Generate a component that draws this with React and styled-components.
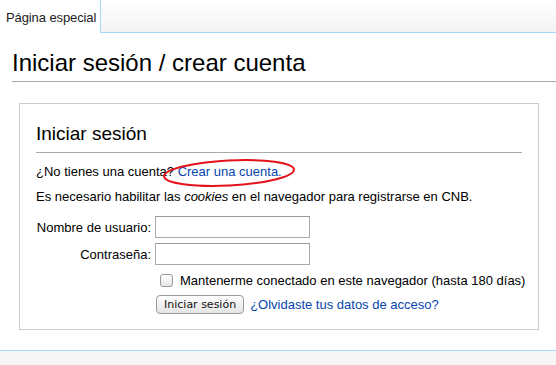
import styled, { createGlobalStyle } from "styled-components";

const Global = createGlobalStyle`
  html, body { margin: 0; padding: 0; background: #fff; }
  body { font-family: "Liberation Sans", Arial, sans-serif; color: #000; }
`;

const Page = styled.div`
  width: 556px;
  height: 365px;
  display: flex;
  flex-direction: column;
  overflow: hidden;
`;

const TopBar = styled.div`
  display: flex;
  height: 33px;
  flex-shrink: 0;
`;

const Tab = styled.div`
  width: 100px;
  padding-left: 6px;
  box-sizing: border-box;
  font-size: 13px;
  letter-spacing: -0.1px;
  line-height: 36px;
  color: #222;
  background: #fff;
`;

const TabRest = styled.div`
  flex: 1;
  border-left: 1px solid #a7d7f9;
  border-bottom: 1px solid #a7d7f9;
  background: linear-gradient(to bottom, #ffffff 0%, #f3f3f3 100%);
`;

const Content = styled.div`
  flex: 1;
  padding: 13px 0 0 12px;
`;

const Title = styled.h1`
  margin: 0;
  font-weight: normal;
  font-size: 24px;
  line-height: 34px;
  padding-bottom: 1px;
  border-bottom: 1px solid #aaa;
`;

const Box = styled.div`
  margin: 21px 17px 0 7px;
  border: 1px solid #ccc;
  padding: 15px 16px 19px 16px;
  height: 191px;
  box-sizing: content-box;
`;

const BoxTitle = styled.h2`
  margin: 0;
  font-weight: normal;
  font-size: 19px;
  line-height: 30px;
  padding-bottom: 3px;
  border-bottom: 1px solid #aaa;
`;

const Para = styled.p`
  position: relative;
  margin: ${(p) => p.$top || 0}px 0 0 0;
  font-size: 13px;
  line-height: 16px;
`;

const Link = styled.a`
  color: #0645ad;
  text-decoration: none;
`;

const Mark = styled.svg`
  position: absolute;
  left: 126px;
  top: -6px;
  pointer-events: none;
`;

const Form = styled.div`
  display: grid;
  grid-template-columns: 115px 155px;
  column-gap: 4px;
  row-gap: 5px;
  margin-top: 11px;
  align-items: center;
`;

const Label = styled.label`
  font-size: 13px;
  text-align: right;
`;

const Input = styled.input`
  width: 155px;
  height: 22px;
  box-sizing: border-box;
  border: 1px solid #aaa;
  border-top-color: #999;
  margin: 0;
`;

const Row = styled.div`
  display: flex;
  align-items: center;
  white-space: nowrap;
  margin: ${(p) => p.$top}px 0 0 ${(p) => p.$left}px;
  font-size: 13px;
`;

const Check = styled.span`
  width: 11px;
  height: 11px;
  border: 1px solid #999;
  border-radius: 3px;
  background: linear-gradient(#fff, #e6e6e6);
  margin-right: 7px;
  flex-shrink: 0;
`;

const Button = styled.button`
  height: 19px;
  padding: 0 7px;
  font-family: "DejaVu Sans", "Liberation Sans", sans-serif;
  font-size: 11px;
  color: #111;
  border: 1px solid #9a9a9a;
  border-radius: 4px;
  background: linear-gradient(#ffffff, #e4e4e4);
  margin-right: 6px;
`;

const Footer = styled.div`
  height: 14px;
  flex-shrink: 0;
  border-top: 1px solid #a7d7f9;
  background: #f6f6f6;
`;

export default function App() {
  return (
    <>
      <Global />
      <Page>
        <TopBar>
          <Tab>Página especial</Tab>
          <TabRest />
        </TopBar>
        <Content>
          <Title>Iniciar sesión / crear cuenta</Title>
          <Box>
            <BoxTitle>Iniciar sesión</BoxTitle>
            <Para $top={11}>
              ¿No tienes una cuenta? <Link href="#">Crear una cuenta.</Link>
              <Mark width="134" height="30" viewBox="0 0 134 30">
                <ellipse
                  cx="67"
                  cy="15"
                  rx="65"
                  ry="12.5"
                  transform="rotate(-3 67 15)"
                  fill="none"
                  stroke="#e3121b"
                  strokeWidth="2"
                />
              </Mark>
            </Para>
            <Para $top={9}>
              Es necesario habilitar las <i>cookies</i> en el navegador para registrarse en CNB.
            </Para>
            <Form>
              <Label>Nombre de usuario:</Label>
              <Input type="text" />
              <Label>Contraseña:</Label>
              <Input type="password" />
            </Form>
            <Row $top={8} $left={124}>
              <Check />
              Mantenerme conectado en este navegador (hasta 180 días)
            </Row>
            <Row $top={7} $left={120}>
              <Button>Iniciar sesión</Button>
              <Link href="#">¿Olvidaste tus datos de acceso?</Link>
            </Row>
          </Box>
        </Content>
        <Footer />
      </Page>
    </>
  );
}
